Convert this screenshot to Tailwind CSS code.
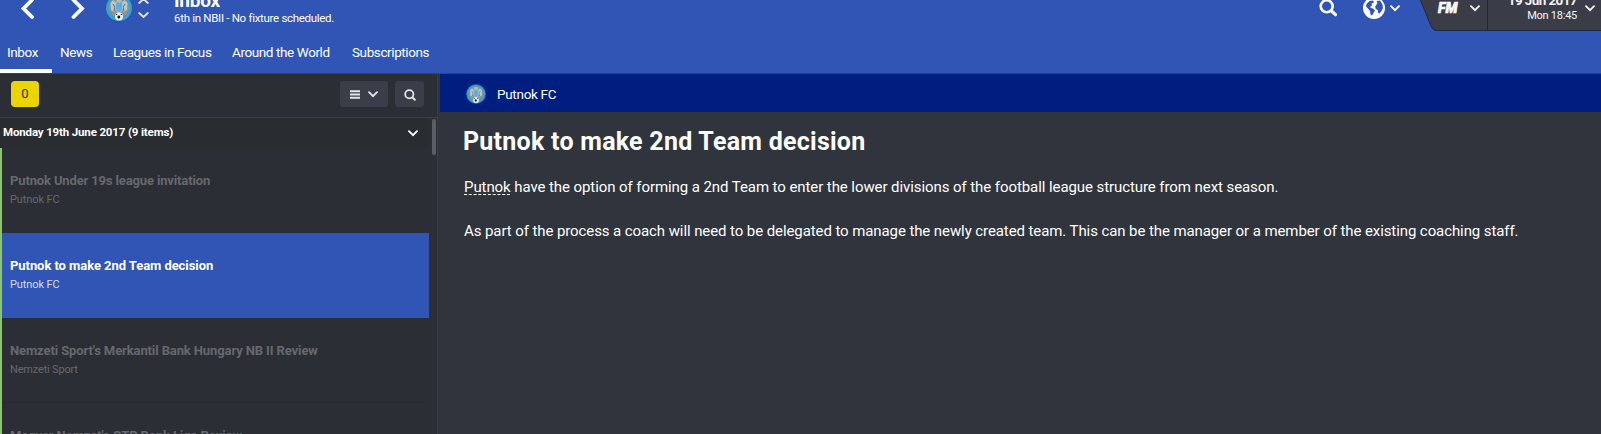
<!DOCTYPE html>
<html lang="en">
<head>
  <meta charset="UTF-8">
  <meta name="viewport" content="width=device-width, initial-scale=1.0">
  <title>Inbox</title>
  <script src="https://cdn.jsdelivr.net/npm/@tailwindcss/browser@4"></script>
</head>
<body class="h-[434px] w-[1601px] overflow-hidden bg-[#30343c] font-['Roboto',sans-serif] text-white whitespace-nowrap">
<svg class="hidden">
	<symbol id="crest" viewBox="0 0 28 28">
		<circle cx="14" cy="14" r="14" fill="#1d5f9e"/>
		<circle cx="14" cy="14" r="13" fill="#3f9fcf"/>
		<circle cx="14" cy="13.500" r="9.800" fill="#8f9396"/>
		<path d="M5.500 9l3-3 2 3-1 9-3.500-2zM22.500 9l-3-3-2 3 1 9 3.500-2z" fill="#c4c4be"/>
		<path d="M8 10l2 3-1 4M20 10l-2 3 1 4" fill="none" stroke="#6b6257" stroke-width="1"/>
		<path d="M10.500 8h7v6.500q0 3-3.500 4.500q-3.500-1.500-3.500-4.500z" fill="#58aee2" stroke="#a9cfe0" stroke-width=".8"/>
		<path d="M11 4.500h6l-1 3h-4z" fill="#c9bf9f"/>
		<circle cx="14" cy="22.500" r="4" fill="#f0f0f0"/>
		<path d="M13 21.500l2 .2.300 2-1.600 1-1.500-1.400zM10.500 21l1.500-1.500.4 1.500zM17.500 21l-1.500-1.500-.4 1.500z" fill="#16181c"/>
	</symbol>
	<symbol id="down" viewBox="0 0 10 7">
		<path d="M1 1.200l4 4 4-4" fill="none" stroke="currentColor" stroke-width="1.900" stroke-linecap="round"/>
	</symbol>
</svg>
<header class="flex h-[73px] justify-between bg-[#3055b5]">
	<div class="flex flex-col">
		<div class="flex h-[35px]">
			<svg class="ml-[18px] h-5 w-[18px]" viewBox="0 0 18 20"><path d="M14 0L5.500 8.500l8.500 8.500" fill="none" stroke="#fff" stroke-width="3.800" stroke-linecap="round"/></svg>
			<svg class="ml-[33px] h-5 w-[18px]" viewBox="0 0 18 20"><path d="M4.500 0l8.500 8.500L4.500 17" fill="none" stroke="#fff" stroke-width="3.800" stroke-linecap="round"/></svg>
			<svg class="-mt-[6px] ml-[18px] size-7"><use href="#crest"/></svg>
			<svg class="ml-[5px] h-5 w-[11px]" viewBox="0 0 11 20"><path d="M1.200 3L5.500-1l4.300 4M1.200 13l4.300 4 4.300-4" fill="none" stroke="#dfe8ff" stroke-width="1.800" stroke-linecap="round"/></svg>
			<div class="-mt-[11px] ml-[25px] flex flex-col items-start">
				<span class="text-[19px] leading-6 font-bold tracking-[-0.2px]">Inbox</span>
				<span class="-mt-[2px] text-[11.5px] leading-[14px] tracking-[-0.3px]">6th in NBII - No fixture scheduled.</span>
			</div>
		</div>
		<nav class="flex h-[38px] text-[13.5px] leading-[35px] tracking-[-0.4px]">
			<a class="h-full w-[52px] border-b-4 border-white pl-[7px]">Inbox</a>
			<a class="w-[53px] pl-2">News</a>
			<a class="w-[119px] pl-2">Leagues in Focus</a>
			<a class="w-[120px] pl-2">Around the World</a>
			<a class="pl-2">Subscriptions</a>
		</nav>
	</div>
	<div class="flex h-[31px]">
		<svg class="mr-[25px] h-5 w-[19px]" viewBox="0 0 19 20"><circle cx="7.700" cy="6.300" r="6" fill="none" stroke="#fff" stroke-width="2.600"/><path d="M12.500 11l4 3.700" stroke="#fff" stroke-width="3.200" stroke-linecap="round"/></svg>
		<svg class="-mt-[3px] size-[22px]" viewBox="0 0 22 22">
			<circle cx="11" cy="11" r="11" fill="#fff"/>
			<path d="M3.500 7l3-3 3.500-.5 1 2-2.500 1 .5 2-2 1.500 1 1 2 .5 2 2-1.500 2.500-1.500 2.500-1.500-1-.5-3.500-2-2.500L3 9.500zM13.500 4l3.500-.5 2.500 4L20 11l-1.500 3-2 2.500-1.300-.5-.4-3-2-1-.6-2.500 1.300-2L14.500 6z" fill="#3055b5"/>
		</svg>
		<svg class="mt-[5px] mr-[20px] ml-[5px] h-[7px] w-[10px]"><use href="#down"/></svg>
		<div class="relative flex h-[31px] w-[181px] text-[#f4f4f6]">
			<svg class="absolute inset-0" width="181" height="31" viewBox="0 0 181 31"><path d="M0-1l11 27q2 4.500 5 4.500h166V-1z" fill="#3a3d47" stroke="#23283a"/><path d="M67.500 0v30" stroke="#24272e"/></svg>
			<span class="relative ml-[18px] w-[24px] text-[14px] leading-[17px] font-black italic [-webkit-text-stroke:0.6px_#fff]">FM</span>
			<svg class="relative mt-[5px] ml-[8px] h-[7px] w-[10px]"><use href="#down"/></svg>
			<div class="relative -mt-[9px] ml-auto flex flex-col items-end">
				<span class="text-[13.5px] leading-[18px] font-bold tracking-[-0.6px]">19 Jun 2017</span>
				<span class="text-[11px] leading-[14px] tracking-[-0.25px]">Mon 18:45</span>
			</div>
			<svg class="relative mt-[5px] mr-[6px] ml-[8px] h-[7px] w-[10px]"><use href="#down"/></svg>
		</div>
	</div>
</header>
<main class="flex h-[361px] border-t border-[#30416b]">
	<aside class="flex w-[438px] flex-col border-r border-[#383b41] bg-[#2b2e34]">
		<div class="flex h-[44px] items-center border-b border-[#3b4045] pr-[13px] pb-1 pl-[11px]">
			<span class="h-[26px] w-7 rounded-[4px] bg-[#ecd400] text-center text-[13px] leading-[25px] text-[#2b2e20]">0</span>
			<div class="ml-auto flex h-[26px] w-12 items-center rounded-[3px] bg-[#3b3e49] pt-[2px] pl-[10px] text-[#e4e5e8]">
				<svg class="h-[9px] w-[10px]" viewBox="0 0 10 9"><path d="M0 1.200h10M0 4.500h10M0 7.800h10" stroke="currentColor" stroke-width="2"/></svg>
				<svg class="ml-[8px] h-[7px] w-[10px]"><use href="#down"/></svg>
			</div>
			<div class="ml-[7px] flex h-[26px] w-[29px] items-center justify-center rounded-[3px] bg-[#3b3e49] pt-[2px]">
				<svg class="size-3" viewBox="0 0 12 12"><circle cx="5.300" cy="5.300" r="4.100" fill="none" stroke="#e4e5e8" stroke-width="1.800"/><path d="M8.500 8.500l2.300 2.300" stroke="#e4e5e8" stroke-width="2" stroke-linecap="round"/></svg>
			</div>
		</div>
		<div class="flex h-[316px]">
			<div class="w-[429px]">
				<div class="flex h-[30px] items-center justify-between bg-[#292c30] pr-[11px] pl-[3px]">
					<span class="-mt-[2px] text-[11.5px] leading-6 font-bold tracking-[-0.15px]">Monday 19th June 2017 (9 items)</span>
					<svg class="h-[7px] w-[10px]"><use href="#down"/></svg>
				</div>
				<ul class="h-[286px] overflow-hidden border-l-2 border-[#8cc66b] text-[#66696e]">
					<li class="h-[85px] pt-[24px] pl-2">
						<p class="text-[13px] leading-[18px] font-bold tracking-[-0.14px]">Putnok Under 19s league invitation</p>
						<p class="text-[11px] leading-5 tracking-[-0.1px]">Putnok FC</p>
					</li>
					<li class="h-[85px] bg-[#3055b5] pt-[24px] pl-2 text-white">
						<p class="text-[13px] leading-[18px] font-bold tracking-[-0.06px]">Putnok to make 2nd Team decision</p>
						<p class="text-[11px] leading-5 tracking-[-0.1px] text-[#d3dcf2]">Putnok FC</p>
					</li>
					<li class="h-[85px] border-b border-[#292b30] pt-[24px] pl-2">
						<p class="text-[13px] leading-[18px] font-bold tracking-[-0.11px]">Nemzeti Sport's Merkantil Bank Hungary NB II Review</p>
						<p class="text-[11px] leading-5 tracking-[-0.18px]">Nemzeti Sport</p>
					</li>
					<li class="h-[85px] pt-[24px] pl-2">
						<p class="text-[13px] leading-[18px] font-bold tracking-[-0.08px]">Magyar Nemzet's OTP Bank Liga Review</p>
					</li>
				</ul>
			</div>
			<div class="mt-[1px] ml-[3px] h-9 w-1 rounded-[2px] bg-[#5a5d61]"></div>
		</div>
	</aside>
	<section class="flex-1 pl-[2px]">
		<div class="flex h-[38px] items-center bg-[#001d80] pl-[26px]">
			<svg class="mt-[2px] size-5"><use href="#crest"/></svg>
			<span class="mt-[2px] ml-[11px] text-[13.5px] tracking-[-0.3px]">Putnok FC</span>
		</div>
		<div class="pt-[14px] pl-6">
			<h1 class="-ml-[1px] text-[25px] leading-8 font-bold tracking-[0.25px]">Putnok to make 2nd Team decision</h1>
			<p class="mt-[17px] text-[15px] leading-6 tracking-[-0.079px]"><span class="underline decoration-dashed decoration-1 underline-offset-[2px] [text-decoration-skip-ink:none]">Putnok</span> have the option of forming a 2nd Team to enter the lower divisions of the football league structure from next season.</p>
			<p class="mt-5 text-[15px] leading-6 tracking-[-0.09px]">As part of the process a coach will need to be delegated to manage the newly created team. This can be the manager or a member of the existing coaching staff.</p>
		</div>
	</section>
</main>
</body>
</html>
